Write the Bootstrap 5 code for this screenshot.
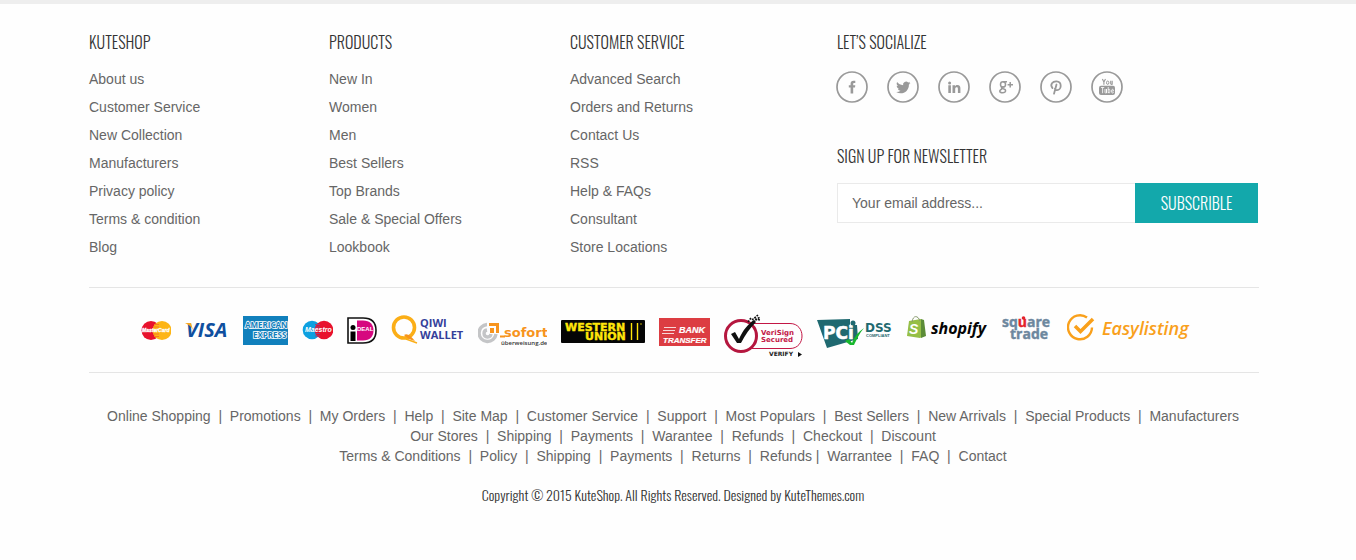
<!DOCTYPE html>
<html lang="en">
<head>
<meta charset="utf-8">
<meta name="viewport" content="width=device-width, initial-scale=1">
<title>KuteShop</title>
<link href="https://cdn.jsdelivr.net/npm/bootstrap@5.3.0/dist/css/bootstrap.min.css" rel="stylesheet">
<style>
  body { font-family: "Liberation Sans", Arial, sans-serif; font-size: 14px; line-height: 20px; color: #666; background: #fefefe; }
  a { color: inherit; text-decoration: none; }
  a:hover { color: #13a8ab; }
  .site-footer { border-top: 4px solid #eee; padding-right: 8px; }
  .footer-wrap { max-width: 1200px; padding: 0 15px; }
  .narrow-type { font-family: Oswald, "Open Sans Condensed", "Roboto Condensed", "Liberation Sans Narrow", "Liberation Sans", sans-serif; font-weight: 300; color: #333; }
  .footer-title { font-size: 16px; line-height: 20px; margin: 0 0 13px; }
  .footer-columns { display: grid; grid-template-columns: 1fr 1fr; gap: 24px 0; padding: 28px 0 26px; }
  .footer-list li { line-height: 28px; }
  .social-title { margin-bottom: 19px; }
  .social-row { gap: 19px; margin: 0 0 43px -1px; }
  .social-row svg { width: 32px; height: 32px; display: block; }
  .newsletter-title { margin-bottom: 17px; }
  .newsletter { margin-right: 1px; }
  .newsletter .form-control { height: 40px; border: 1px solid #eaeaea; border-right: 0; border-radius: 0; padding: 0 14px; font-size: 14px; background: #fff; color: #666; }
  .newsletter .form-control::placeholder { color: #666; opacity: 1; }
  .newsletter .btn { width: 123px; height: 40px; border: 0; border-radius: 0; padding: 0; background: #13a8ab; color: #fff; font-size: 16px; }
  .logo-strip { border: solid #e5e5e5; border-width: 1px 0; gap: 14px; padding: 26px 16px 14px 0; }
  .logo-strip svg { height: 44px; flex: none; display: block; }
  .logo-strip text { font-family: "Liberation Sans", Arial, sans-serif; font-weight: 700; }
  .logo-strip .humanist { font-family: "Open Sans", sans-serif; }
  .logo-strip .wide-type { font-family: "DejaVu Sans", sans-serif; }
  .logo-strip .semi { font-weight: 600; }
  .link-lines { padding-top: 33px; padding-right: 2px; }
  .copyright { font-size: 14px; margin: 19px 2px 54px 0; }
  @media (min-width: 992px) {
    .footer-columns { grid-template-columns: 240fr 241fr 267fr 422fr; }
  }
</style>
</head>
<body>
<footer class="site-footer">
  <div class="container-fluid footer-wrap mx-auto">
    <div class="footer-columns">
      <section>
        <h2 class="footer-title narrow-type">KUTESHOP</h2>
        <ul class="list-unstyled footer-list mb-0">
          <li><a href="#">About us</a></li><li><a href="#">Customer Service</a></li><li><a href="#">New Collection</a></li><li><a href="#">Manufacturers</a></li><li><a href="#">Privacy policy</a></li><li><a href="#">Terms &amp; condition</a></li><li><a href="#">Blog</a></li>
        </ul>
      </section>
      <section>
        <h2 class="footer-title narrow-type">PRODUCTS</h2>
        <ul class="list-unstyled footer-list mb-0">
          <li><a href="#">New In</a></li><li><a href="#">Women</a></li><li><a href="#">Men</a></li><li><a href="#">Best Sellers</a></li><li><a href="#">Top Brands</a></li><li><a href="#">Sale &amp; Special Offers</a></li><li><a href="#">Lookbook</a></li>
        </ul>
      </section>
      <section>
        <h2 class="footer-title narrow-type">CUSTOMER SERVICE</h2>
        <ul class="list-unstyled footer-list mb-0">
          <li><a href="#">Advanced Search</a></li><li><a href="#">Orders and Returns</a></li><li><a href="#">Contact Us</a></li><li><a href="#">RSS</a></li><li><a href="#">Help &amp; FAQs</a></li><li><a href="#">Consultant</a></li><li><a href="#">Store Locations</a></li>
        </ul>
      </section>
      <section>
        <h2 class="footer-title narrow-type social-title">LET’S SOCIALIZE</h2>
        <div class="d-flex flex-wrap social-row">
          <a href="#" aria-label="Facebook"><svg viewBox="0 0 32 32"><circle cx="16" cy="16" r="15" fill="none" stroke="#999" stroke-width="1.7"/><path fill="#999" d="M14.600 22.500v-6h-1.800v-2.300h1.800v-1.500c0-2 1-3 2.900-3 .7 0 1.300 0 1.800.1v2.200h-1.100c-.8 0-1 .4-1 1.100v1.100h2.100l-.3 2.300h-1.800v6z"/></svg></a>
          <a href="#" aria-label="Twitter"><svg viewBox="0 0 32 32"><circle cx="16" cy="16" r="15" fill="none" stroke="#999" stroke-width="1.7"/><path fill="#999" d="M23.400 11.900c-.5.3-1 .4-1.600.5.6-.4 1-.9 1.200-1.600-.6.3-1.200.6-1.800.7a3 3 0 0 0-5.100 2.700c-2.500-.1-4.600-1.300-6-3.100-.9 1.500-.3 3.100.9 4-.5 0-.9-.1-1.300-.4 0 1.500 1 2.700 2.400 3-.4.1-.9.1-1.300 0 .4 1.200 1.400 2 2.700 2a6 6 0 0 1-4.300 1.300c5.800 3.500 13-.4 12.700-7.500.6-.4 1.100-.9 1.500-1.600z"/></svg></a>
          <a href="#" aria-label="LinkedIn"><svg viewBox="0 0 32 32"><circle cx="16" cy="16" r="15" fill="none" stroke="#999" stroke-width="1.7"/><path fill="#999" d="M10.300 14.300h2.600V22h-2.600zM14.500 14.300H17v1.100c.5-.8 1.300-1.300 2.400-1.300 2.300 0 3 1.500 3 3.500V22h-2.500v-4.100c0-1-.2-1.700-1.200-1.700s-1.500.7-1.500 1.700V22h-2.700z"/><circle cx="11.600" cy="11.900" r="1.500" fill="#999"/></svg></a>
          <a href="#" aria-label="Google Plus"><svg viewBox="0 0 32 32"><circle cx="16" cy="16" r="15" fill="none" stroke="#999" stroke-width="1.7"/><g fill="none" stroke="#999" stroke-width="1.500"><ellipse cx="14" cy="13.400" rx="2.500" ry="2.600"/><path d="M14 10.800h4M14.800 15.700c-3 .5-3.100 1.700-.7 2.100 3.500.6 3.300 4-.6 4-3.300 0-3.700-2.700-.5-3.700M21.200 11v5.400M18.600 13.700H24"/></g></svg></a>
          <a href="#" aria-label="Pinterest"><svg viewBox="0 0 32 32"><circle cx="16" cy="16" r="15" fill="none" stroke="#999" stroke-width="1.7"/><path fill="none" stroke="#999" stroke-width="1.800" stroke-linecap="round" d="M12.500 17.100c-3-3.700.2-6.900 4-6.700 6 .4 5 8.700.6 8.700-1.200 0-2-.6-2.200-1.400M16.500 13.500 14 22.700"/></svg></a>
          <a href="#" aria-label="YouTube"><svg viewBox="0 0 32 32"><circle cx="16" cy="16" r="15" fill="none" stroke="#999" stroke-width="1.7"/><path fill="none" stroke="#999" stroke-width="1.100" d="m11.400 8 1.500 3.100v2.700M14.500 8l-1.600 3.100M19.700 9.800v2.900c.3 1 1.300.8 1.500-.1V9.800v3.900"/><ellipse cx="16.700" cy="11.700" rx="1.200" ry="1.700" fill="none" stroke="#999"/><rect x="8" y="14.700" width="16" height="9.300" rx="2" fill="#999"/><path fill="none" stroke="#fff" stroke-width=".8" d="M10 16.500h3.200M11.600 16.500v5.700M14 18v3.500c.3.700 1 .6 1.500-.1V18v4.200M17.200 16v6.200M17.200 18.700c1.700-1 1.700.1 1.700 1.300s0 2.600-1.700 1.400M22.500 21c-.1 1.400-2 1.300-2-.4 0-2.900 2-3.100 2-.6h-2"/></svg></a>
        </div>
        <h2 class="footer-title narrow-type newsletter-title">SIGN UP FOR NEWSLETTER</h2>
        <form class="newsletter d-flex">
          <label class="visually-hidden" for="email">Email address</label>
          <input class="form-control" id="email" type="email" placeholder="Your email address...">
          <button class="btn narrow-type flex-shrink-0" type="submit">SUBSCRIBLE</button>
        </form>
      </section>
    </div>

    <div class="logo-strip d-flex flex-wrap justify-content-center">
      <!-- MasterCard -->
      <svg width="30" viewBox="0 0 30 44"><circle cx="10" cy="16.500" r="9.500" fill="#e8112d"/><circle cx="21" cy="16.500" r="9.500" fill="#fdb515"/><path d="M13 10.500h5M12 13h6M12 20h6M13 22.500h5" stroke="#f57a20"/><text x="1" y="18" font-size="5" font-style="italic" fill="#fff" stroke="#fff" stroke-width=".3">MasterCard</text></svg>
      <!-- Visa -->
      <svg width="44" viewBox="0 0 44 44"><text x="1" y="23" font-size="20" font-style="italic" fill="#0f4f9f" class="humanist">VISA</text><path d="M0 9h6l2 7C6 12 4 11 0 9z" fill="#f7a823"/></svg>
      <!-- American Express -->
      <svg width="45" viewBox="0 0 45 44"><path d="M0 2h45v29H0z" fill="#1180bc"/><g fill="#1180bc" stroke="#fff" stroke-width="1.500" paint-order="stroke"><text x="2" y="14" font-size="8" class="humanist">AMERICAN</text><text x="10" y="24" font-size="8" class="humanist">EXPRESS</text></g></svg>
      <!-- Maestro -->
      <svg width="31" viewBox="0 0 31 44"><circle cx="10" cy="16" r="9.300" fill="#0da0e0"/><circle cx="22" cy="16" r="9.300" fill="#e8112d"/><path d="M13 10.500h5M13 13h5M13 19.500h5M13 22h5" stroke="#93457c"/><text x="3" y="18" font-size="7" font-style="italic" fill="#fff">Maestro</text></svg>
      <!-- iDEAL -->
      <svg width="30" viewBox="0 0 30 44"><path d="M1 4h15c9 0 13 5 13 12.500S25 29 16 29H1z" fill="#fff" stroke="#111" stroke-width="1.600"/><path d="M10 6.500h6c7 0 10.500 4 10.500 10s-3.500 10-10.500 10h-6z" fill="#d6087f"/><circle cx="6" cy="13.500" r="2.500"/><path d="M3.500 17.500h5V27h-5z"/><text x="10" y="17" font-size="6" fill="#fff">DEAL</text></svg>
      <!-- Qiwi Wallet -->
      <svg width="73" viewBox="0 0 73 44"><circle cx="13" cy="13.500" r="10.500" fill="none" stroke="#fbae17" stroke-width="3.600"/><path d="M13 21c3-2 6 0 11 6-5-1-8-3-11-6z" fill="#f7941d"/><path d="m15 25 11 4" stroke="#fbae17" stroke-width="1.500"/><g fill="#34409a"><text class="humanist" x="29" y="13" font-size="11">QIWI</text><text class="humanist" x="29" y="25" font-size="11">WALLET</text></g></svg>
      <!-- Sofort -->
      <svg width="69" viewBox="0 0 69 44"><path d="M9 10.500A8.500 8.500 0 1 0 18 20M9 16a3.500 3.500 0 1 0 4 4" fill="none" stroke="#c4c5c7" stroke-width="3.400"/><path d="M11 10.500h8.500V19" fill="none" stroke="#f7941d" stroke-width="3"/><path d="M12 14h4v5h-4z" fill="#f7941d"/><path d="M22 21.500h5v2h-5z" fill="#f7941d"/><text class="wide-type" x="26" y="23" font-size="13" fill="#f7941d">sofort</text><text class="humanist semi" x="23" y="31" font-size="6" fill="#333">überweisung.de</text></svg>
      <!-- Western Union -->
      <svg width="84" viewBox="0 0 84 44"><rect y="6" width="84" height="23" rx="1" fill="#050505"/><g fill="#ffe60a" stroke="#ffe60a" stroke-width=".4"><text class="wide-type" x="4" y="17" font-size="11">WESTERN</text><text class="wide-type" x="24" y="26" font-size="11">UNION</text></g><path d="M70.500 9v17M76.500 9v17" stroke="#ffe60a" stroke-width="1.400"/><circle cx="80" cy="10" r=".7" fill="#ffe60a"/></svg>
      <!-- Bank Transfer -->
      <svg width="51" viewBox="0 0 51 44"><path d="M0 4h51v28H0z" fill="#dc3d42"/><path d="M5 13.500h12M4 16.500h12M3 19.500h12" stroke="#fff" stroke-width=".8"/><g fill="#fff" stroke="#fff" stroke-width=".2" font-style="italic"><text x="20" y="19" font-size="9">BANK</text><text x="4" y="29" font-size="8">TRANSFER</text></g></svg>
      <!-- VeriSign -->
      <svg width="79" viewBox="0 0 79 44"><path d="M28 9.500h38c16 0 16 25 0 25H28" fill="none" stroke="#c31645" stroke-width="1"/><circle cx="17" cy="22" r="15.500" fill="#fff" stroke="#b5173f" stroke-width="3"/><path d="m7 20 4-2 4 7C19 16 24 10 30 6l2 2c-6 6-11 13-15 21h-4z" fill="#111"/><path d="m28 6 6-5M29 8l7-5M31 5l5 1M24 8l3-4" stroke="#111" stroke-width="1.600" stroke-dasharray="2 1"/><g fill="#c31645"><text x="37" y="21" font-size="7" class="wide-type">VeriSign</text><text x="37" y="28" font-size="7" class="wide-type">Secured</text></g><path d="M43 36h31v7H43z" fill="#fefefe"/><text x="45" y="42" font-size="6" fill="#222" class="wide-type">VERIFY</text><path d="m74 38 4 2.500-4 2.500z" fill="#111"/></svg>
      <!-- PCI DSS -->
      <svg width="76" viewBox="0 0 76 44"><path d="m0 6 33-1v6h7l1 14-31 9z" fill="#1f6970"/><text x="6" y="25" font-size="17" fill="#fff" stroke="#fff" stroke-width=".5" class="wide-type">PCi</text><circle cx="36" cy="9" r="2.500" fill="#1f6970"/><path d="m28 27 4-2 3 4c2-6 6-11 12-15-5 6-7 11-10 17h-4z" fill="#18b72d"/><g fill="#1f6970"><text x="48" y="18" font-size="12" class="wide-type">DSS</text><text x="49" y="23" font-size="4">COMPLIANT</text></g></svg>
      <!-- Shopify -->
      <svg width="81" viewBox="0 0 81 44"><path d="m2 7 12-2 3 17-4 2-13-2z" fill="#95bf46"/><path d="m14 5 3 1 2 16-5 2z" fill="#5c8c38"/><path d="M5 8c1-7 6-7 8-1" fill="none" stroke="#87986d"/><text x="2" y="20" font-size="14" font-style="italic" fill="#fff">S</text><text class="humanist" x="24" y="20" font-size="16" font-style="italic" fill="#050505">shopify</text></svg>
      <!-- Square Trade -->
      <svg width="51" viewBox="0 0 51 44"><g fill="#6d879e" stroke="#6d879e" stroke-width=".4"><text class="humanist" x="0" y="13" font-size="14">sq<tspan fill="#e4232b" stroke="#e4232b">u</tspan>are</text><text class="humanist" x="8" y="25" font-size="14">trade</text></g><circle cx="21.500" cy="4" r="1.800" fill="#e4232b"/></svg>
      <!-- Easylisting -->
      <svg width="124" viewBox="0 0 124 44"><path d="M20 3.500a12 12 0 1 0 5 10" fill="none" stroke="#f9a01b" stroke-width="2.400"/><path d="m8 12 5.500 5.500L26 5" fill="none" stroke="#f9a01b" stroke-width="3.500"/><text class="humanist semi" x="35" y="21" font-size="18" font-style="italic" fill="#f9a01b">Easylisting</text></svg>
    </div>

    <nav class="link-lines text-center" aria-label="Footer">
      <div><a href="#">Online Shopping</a>&nbsp; | &nbsp;<a href="#">Promotions</a>&nbsp; | &nbsp;<a href="#">My Orders</a>&nbsp; | &nbsp;<a href="#">Help</a>&nbsp; | &nbsp;<a href="#">Site Map</a>&nbsp; | &nbsp;<a href="#">Customer Service</a>&nbsp; | &nbsp;<a href="#">Support</a>&nbsp; | &nbsp;<a href="#">Most Populars</a>&nbsp; | &nbsp;<a href="#">Best Sellers</a>&nbsp; | &nbsp;<a href="#">New Arrivals</a>&nbsp; | &nbsp;<a href="#">Special Products</a>&nbsp; | &nbsp;<a href="#">Manufacturers</a></div>
      <div><a href="#">Our Stores</a>&nbsp; | &nbsp;<a href="#">Shipping</a>&nbsp; | &nbsp;<a href="#">Payments</a>&nbsp; | &nbsp;<a href="#">Warantee</a>&nbsp; | &nbsp;<a href="#">Refunds</a>&nbsp; | &nbsp;<a href="#">Checkout</a>&nbsp; | &nbsp;<a href="#">Discount</a></div>
      <div><a href="#">Terms &amp; Conditions</a>&nbsp; | &nbsp;<a href="#">Policy</a>&nbsp; | &nbsp;<a href="#">Shipping</a>&nbsp; | &nbsp;<a href="#">Payments</a>&nbsp; | &nbsp;<a href="#">Returns</a>&nbsp; | &nbsp;<a href="#">Refunds</a> | &nbsp;<a href="#">Warrantee</a>&nbsp; | &nbsp;<a href="#">FAQ</a>&nbsp; | &nbsp;<a href="#">Contact</a></div>
    </nav>
    <p class="copyright narrow-type text-center">Copyright © 2015 KuteShop. All Rights Reserved. Designed by KuteThemes.com</p>
  </div>
</footer>
<script src="https://cdn.jsdelivr.net/npm/bootstrap@5.3.0/dist/js/bootstrap.bundle.min.js"></script>
</body>
</html>
